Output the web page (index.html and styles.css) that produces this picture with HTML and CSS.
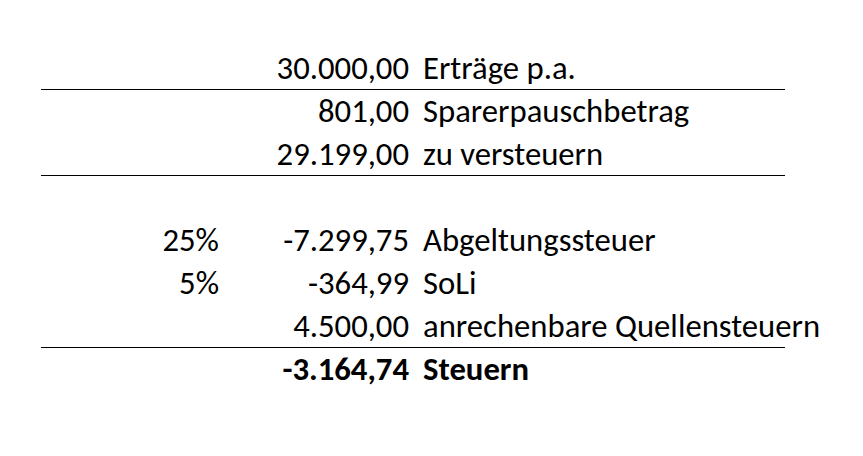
FILE: index.html
```html
<!DOCTYPE html>
<html lang="de">
<head>
<meta charset="utf-8">
<link rel="stylesheet" href="styles.css">
</head>
<body>
<div class="sheet">
  <div class="row line"><span class="pct"></span><span class="num">30.000,00</span><span class="label">Erträge p.a.</span></div>
  <div class="row"><span class="pct"></span><span class="num">801,00</span><span class="label">Sparerpauschbetrag</span></div>
  <div class="row line"><span class="pct"></span><span class="num">29.199,00</span><span class="label">zu versteuern</span></div>
  <div class="row"><span class="pct"></span><span class="num"></span><span class="label"></span></div>
  <div class="row"><span class="pct">25%</span><span class="num">-7.299,75</span><span class="label">Abgeltungssteuer</span></div>
  <div class="row"><span class="pct">5%</span><span class="num">-364,99</span><span class="label">SoLi</span></div>
  <div class="row line"><span class="pct"></span><span class="num">4.500,00</span><span class="label">anrechenbare Quellensteuern</span></div>
  <div class="row total"><span class="pct"></span><span class="num">-3.164,74</span><span class="label">Steuern</span></div>
</div>
</body>
</html>
```

FILE: styles.css
```css
html, body {
  margin: 0;
  padding: 0;
  background: #fff;
}
body {
  width: 863px;
  height: 456px;
  overflow: hidden;
  font-family: Carlito, "Open Sans", "Liberation Sans", sans-serif;
  font-size: 32.7px;
  color: #000;
}
.sheet {
  padding: 47px 0 0 41px;
  display: flex;
  flex-direction: column;
  align-items: flex-start;
}
.row {
  display: grid;
  grid-template-columns: 187px 190px 367px;
  width: 744px;
  height: 43px;
  box-sizing: border-box;
  line-height: 43px;
  white-space: nowrap;
}
.row.line {
  border-bottom: 1px solid #000;
}
.pct, .num {
  text-align: right;
  padding-right: 9px;
}
.label {
  padding-left: 5px;
  overflow: visible;
}
.total {
  font-weight: bold;
}
```
